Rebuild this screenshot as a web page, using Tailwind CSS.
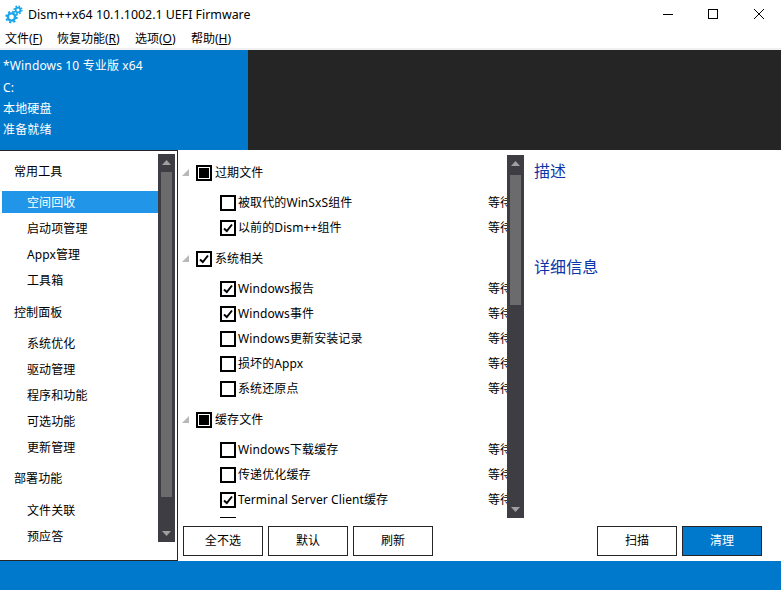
<!DOCTYPE html>
<html lang="en">
<head>
    <meta charset="UTF-8">
    <title>Dism++</title>
    <script src="https://cdn.jsdelivr.net/npm/@tailwindcss/browser@4"></script>
</head>
<body class="bg-white">
<div class="w-[781px] h-[590px] flex flex-col overflow-hidden text-[13px] text-black font-['Noto_Sans','Noto_Sans_CJK_SC',sans-serif]">

    <!-- Title bar -->
    <div class="h-[30px] flex items-center">
        <svg class="ml-[4px] mb-[2px] w-[19px] h-[19px]" viewBox="0 0 19 19" fill="none" stroke="#1ba5ea">
            <circle cx="7.5" cy="12" r="3.6" stroke-width="2.4"/>
            <circle cx="7.5" cy="12" r="5.4" stroke-width="1.8" stroke-dasharray="2.1 2.14"/>
            <circle cx="14" cy="5" r="2.4" stroke-width="1.8"/>
            <circle cx="14" cy="5" r="3.9" stroke-width="1.5" stroke-dasharray="1.6 1.46"/>
        </svg>
        <span class="ml-[5px] text-[12.4px]">Dism++x64 10.1.1002.1 UEFI Firmware</span>
        <div class="ml-auto mb-[2px] flex items-center">
            <svg class="w-[10px] h-[10px]" viewBox="0 0 10 10"><path d="M0 5.5H10" stroke="#000"/></svg>
            <svg class="ml-[35px] w-[10px] h-[10px]" viewBox="0 0 10 10" fill="none"><rect x="0.5" y="0.5" width="9" height="9" stroke="#000"/></svg>
            <svg class="ml-[36px] mr-[17px] w-[10px] h-[10px]" viewBox="0 0 10 10"><path d="M0 0L10 10M10 0L0 10" stroke="#000"/></svg>
        </div>
    </div>

    <!-- Menu -->
    <div class="h-[20px] flex items-start text-[12px] pl-[5px] border-b-2 border-[#f0f0f0] leading-[18px]">
        <span class="w-[52px]">文件(<u>F</u>)</span>
        <span class="w-[78px]">恢复功能(<u>R</u>)</span>
        <span class="w-[56px]">选项(<u>O</u>)</span>
        <span>帮助(<u>H</u>)</span>
    </div>

    <!-- Info panel -->
    <div class="h-[100px] flex bg-[#252525] shrink-0">
        <div class="w-[248px] bg-[#0078cc] text-white text-[12px] tracking-[0.15px] pl-[3px] pt-[5px] leading-[21px]">
            <div class="h-[22px]">*Windows 10 专业版 x64</div>
            <div>C:</div>
            <div>本地硬盘</div>
            <div>准备就绪</div>
        </div>
    </div>

    <!-- Body -->
    <div class="h-[411px] flex text-[12px] tracking-[0.1px]">
        <!-- Sidebar -->
        <div class="w-[178px] shrink-0 flex border-r border-y border-[#252525]">
            <div class="w-[156px] ml-[2px] pt-[8px] leading-[26px]">
                <div class="h-[26px] pl-[12px] mb-[6px]">常用工具</div>
                <div class="h-[22px] mb-[3px] pl-[25px] leading-[24px] bg-[#2196e8] text-white">空间回收</div>
                <div class="h-[26px] pl-[25px]">启动项管理</div>
                <div class="h-[26px] pl-[25px]">Appx管理</div>
                <div class="h-[26px] pl-[25px]">工具箱</div>
                <div class="h-[26px] pl-[12px] mt-[6px] mb-[5px]">控制面板</div>
                <div class="h-[26px] pl-[25px]">系统优化</div>
                <div class="h-[26px] pl-[25px]">驱动管理</div>
                <div class="h-[26px] pl-[25px]">程序和功能</div>
                <div class="h-[26px] pl-[25px]">可选功能</div>
                <div class="h-[26px] pl-[25px]">更新管理</div>
                <div class="h-[26px] pl-[12px] mt-[5px] mb-[6px]">部署功能</div>
                <div class="h-[26px] pl-[25px]">文件关联</div>
                <div class="h-[26px] pl-[25px]">预应答</div>
            </div>
            <!-- Sidebar scrollbar -->
            <div class="w-[17px] h-[388px] mt-[3px] bg-[#3f3d44] flex flex-col items-center">
                <svg class="w-[9px] h-[5px] mt-[6px]" viewBox="0 0 9 5"><path d="M4.5 0L9 5H0Z" fill="#a0a0a0"/></svg>
                <div class="w-[11px] h-[325px] mt-[7px] bg-[#6b6b6b]"></div>
                <svg class="w-[9px] h-[5px] mt-auto mb-[6px]" viewBox="0 0 9 5"><path d="M0 0H9L4.5 5Z" fill="#a0a0a0"/></svg>
            </div>
        </div>

        <!-- Main -->
        <div class="flex-1 flex flex-col ml-[1px]">
            <div class="flex">
                <div class="w-[345px] h-[376px] flex">
                    <!-- Tree -->
                    <div class="w-[328px] h-[363px] mt-[5px] pt-[5px] overflow-hidden shrink-0">
                        <div class="h-[25px] flex items-center pl-[3px]">
                            <svg class="w-[7px] h-[7px]" viewBox="0 0 7 7"><path d="M7 0V7H0Z" fill="#b8b8b8"/></svg>
                            <span class="ml-[7px] w-[16px] h-[16px] shrink-0 border-2 border-black flex items-center justify-center"><span class="w-[10px] h-[10px] bg-black"></span></span>
                            <span class="ml-[3px]">过期文件</span>
                        </div>
                        <div class="h-[25px] mt-[5px] flex items-center pl-[41px]">
                            <span class="w-[16px] h-[16px] shrink-0 border-2 border-black"></span>
                            <span class="ml-[2px] w-[250px] shrink-0">被取代的WinSxS组件</span><span class="whitespace-nowrap">等待</span>
                        </div>
                        <div class="h-[25px] flex items-center pl-[41px]">
                            <span class="w-[16px] h-[16px] shrink-0 border-2 border-black flex items-center justify-center"><svg class="w-[10px] h-[10px]" viewBox="0 0 10 10" fill="none"><path d="M1 5.5L3.8 8L9 1.5" stroke="#000" stroke-width="2"/></svg></span>
                            <span class="ml-[2px] w-[250px] shrink-0">以前的Dism++组件</span><span class="whitespace-nowrap">等待</span>
                        </div>
                        <div class="h-[25px] mt-[6px] flex items-center pl-[3px]">
                            <svg class="w-[7px] h-[7px]" viewBox="0 0 7 7"><path d="M7 0V7H0Z" fill="#b8b8b8"/></svg>
                            <span class="ml-[7px] w-[16px] h-[16px] shrink-0 border-2 border-black flex items-center justify-center"><svg class="w-[10px] h-[10px]" viewBox="0 0 10 10" fill="none"><path d="M1 5.5L3.8 8L9 1.5" stroke="#000" stroke-width="2"/></svg></span>
                            <span class="ml-[3px]">系统相关</span>
                        </div>
                        <div class="h-[25px] mt-[5px] flex items-center pl-[41px]">
                            <span class="w-[16px] h-[16px] shrink-0 border-2 border-black flex items-center justify-center"><svg class="w-[10px] h-[10px]" viewBox="0 0 10 10" fill="none"><path d="M1 5.5L3.8 8L9 1.5" stroke="#000" stroke-width="2"/></svg></span>
                            <span class="ml-[2px] w-[250px] shrink-0">Windows报告</span><span class="whitespace-nowrap">等待</span>
                        </div>
                        <div class="h-[25px] flex items-center pl-[41px]">
                            <span class="w-[16px] h-[16px] shrink-0 border-2 border-black flex items-center justify-center"><svg class="w-[10px] h-[10px]" viewBox="0 0 10 10" fill="none"><path d="M1 5.5L3.8 8L9 1.5" stroke="#000" stroke-width="2"/></svg></span>
                            <span class="ml-[2px] w-[250px] shrink-0">Windows事件</span><span class="whitespace-nowrap">等待</span>
                        </div>
                        <div class="h-[25px] flex items-center pl-[41px]">
                            <span class="w-[16px] h-[16px] shrink-0 border-2 border-black"></span>
                            <span class="ml-[2px] w-[250px] shrink-0">Windows更新安装记录</span><span class="whitespace-nowrap">等待</span>
                        </div>
                        <div class="h-[25px] flex items-center pl-[41px]">
                            <span class="w-[16px] h-[16px] shrink-0 border-2 border-black"></span>
                            <span class="ml-[2px] w-[250px] shrink-0">损坏的Appx</span><span class="whitespace-nowrap">等待</span>
                        </div>
                        <div class="h-[25px] flex items-center pl-[41px]">
                            <span class="w-[16px] h-[16px] shrink-0 border-2 border-black"></span>
                            <span class="ml-[2px] w-[250px] shrink-0">系统还原点</span><span class="whitespace-nowrap">等待</span>
                        </div>
                        <div class="h-[25px] mt-[6px] flex items-center pl-[3px]">
                            <svg class="w-[7px] h-[7px]" viewBox="0 0 7 7"><path d="M7 0V7H0Z" fill="#b8b8b8"/></svg>
                            <span class="ml-[7px] w-[16px] h-[16px] shrink-0 border-2 border-black flex items-center justify-center"><span class="w-[10px] h-[10px] bg-black"></span></span>
                            <span class="ml-[3px]">缓存文件</span>
                        </div>
                        <div class="h-[25px] mt-[5px] flex items-center pl-[41px]">
                            <span class="w-[16px] h-[16px] shrink-0 border-2 border-black"></span>
                            <span class="ml-[2px] w-[250px] shrink-0">Windows下载缓存</span><span class="whitespace-nowrap">等待</span>
                        </div>
                        <div class="h-[25px] flex items-center pl-[41px]">
                            <span class="w-[16px] h-[16px] shrink-0 border-2 border-black"></span>
                            <span class="ml-[2px] w-[250px] shrink-0">传递优化缓存</span><span class="whitespace-nowrap">等待</span>
                        </div>
                        <div class="h-[25px] flex items-center pl-[41px]">
                            <span class="w-[16px] h-[16px] shrink-0 border-2 border-black flex items-center justify-center"><svg class="w-[10px] h-[10px]" viewBox="0 0 10 10" fill="none"><path d="M1 5.5L3.8 8L9 1.5" stroke="#000" stroke-width="2"/></svg></span>
                            <span class="ml-[2px] w-[250px] shrink-0">Terminal Server Client缓存</span><span class="whitespace-nowrap">等待</span>
                        </div>
                        <div class="h-[25px] flex items-center pl-[41px]">
                            <span class="w-[16px] h-[16px] shrink-0 border-2 border-black"></span>
                        </div>
                    </div>
                    <!-- Tree scrollbar -->
                    <div class="w-[17px] h-[363px] mt-[5px] bg-[#3f3d44] flex flex-col items-center shrink-0">
                        <svg class="w-[9px] h-[5px] mt-[6px]" viewBox="0 0 9 5"><path d="M4.5 0L9 5H0Z" fill="#a0a0a0"/></svg>
                        <div class="w-[11px] h-[130px] mt-[9px] bg-[#6b6b6b]"></div>
                        <svg class="w-[9px] h-[5px] mt-auto mb-[6px]" viewBox="0 0 9 5"><path d="M0 0H9L4.5 5Z" fill="#a0a0a0"/></svg>
                    </div>
                </div>
                <!-- Description -->
                <div class="ml-[10px] text-[16px] text-[#0b35a8]">
                    <div class="mt-[9px] leading-[24px]">描述</div>
                    <div class="mt-[72px] leading-[24px]">详细信息</div>
                </div>
            </div>
            <!-- Buttons -->
            <div class="flex pl-[4px] gap-[5px] text-[12px]">
                <div class="w-[80px] h-[30px] border border-[#252525] flex items-center justify-center">全不选</div>
                <div class="w-[80px] h-[30px] border border-[#252525] flex items-center justify-center">默认</div>
                <div class="w-[80px] h-[30px] border border-[#252525] flex items-center justify-center">刷新</div>
                <div class="ml-auto mr-[19px] flex gap-[5px]">
                    <div class="w-[80px] h-[30px] border border-[#252525] flex items-center justify-center">扫描</div>
                    <div class="w-[80px] h-[30px] border border-[#252525] bg-[#0078cc] text-white flex items-center justify-center">清理</div>
                </div>
            </div>
        </div>
    </div>

    <!-- Status bar -->
    <div class="flex-1 bg-[#0078cc]"></div>
</div>
</body>
</html>
